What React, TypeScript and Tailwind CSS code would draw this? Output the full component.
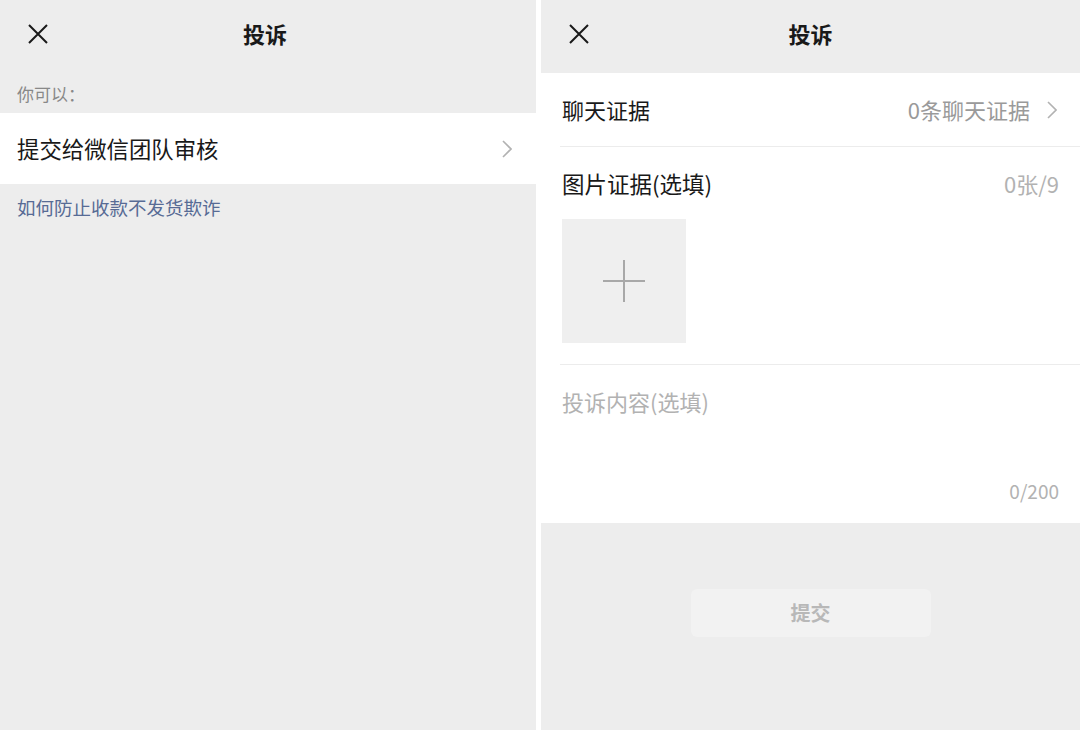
const font = { fontFamily: '"Noto Sans CJK SC", "Noto Sans", sans-serif' };

function CloseIcon() {
  return (
    <svg width="22" height="22" viewBox="0 0 22 22" fill="none" stroke="#191919" strokeWidth="2">
      <path d="M2 2 L20 20 M20 2 L2 20" />
    </svg>
  );
}

function Chevron() {
  return (
    <svg width="10" height="18" viewBox="0 0 10 18" fill="none" stroke="#b2b2b2" strokeWidth="1.6">
      <path d="M1 1 L9 9 L1 17" />
    </svg>
  );
}

function Header({ shift }: { shift?: boolean }) {
  return (
    <div className={`relative flex h-[68px] items-center justify-center ${shift ? 'pr-[6px]' : ''}`}>
      <div className="absolute left-[27px] top-[23px]">
        <CloseIcon />
      </div>
      <span className="pb-[2px] text-[22px] font-bold text-[#191919]">投诉</span>
    </div>
  );
}

export default function App() {
  return (
    <div className="flex h-[730px] w-[1080px] justify-between overflow-hidden bg-white" style={font}>
      {/* left: choose action */}
      <div className="flex w-[536px] flex-col bg-[#ededed]">
        <Header shift />
        <div className="pl-[17px] pt-[14px] pb-[7px] text-[17px] leading-[24px] text-[#888888]">你可以：</div>
        <div className="flex h-[71px] items-center justify-between bg-white pl-[17px] pr-[24px]">
          <span className="text-[22.4px] text-[#191919]">提交给微信团队审核</span>
          <Chevron />
        </div>
        <div className="pl-[17px] pt-[12px] text-[18.5px] leading-[22px] text-[#576b95]">如何防止收款不发货欺诈</div>
      </div>

      {/* right: complaint form */}
      <div className="flex w-[539px] flex-col bg-[#ededed]">
        <div className="h-[73px]">
          <Header />
        </div>
        <div className="bg-white">
          <div className="flex h-[73px] items-center justify-between pl-[21px] pr-[23px]">
            <span className="text-[22px] text-[#191919]">聊天证据</span>
            <div className="flex items-center gap-[17px]">
              <span className="text-[22px] text-[#9a9a9a]">0条聊天证据</span>
              <Chevron />
            </div>
          </div>
          <div className="ml-[19px] border-t border-[#ececec]" />
          <div className="px-[21px] pt-[23px] pb-[21px]">
            <div className="flex items-center justify-between leading-[26px]">
              <span className="text-[22.5px] text-[#191919]">图片证据(选填)</span>
              <span className="text-[22px] text-[#b2b2b2]">0张/9</span>
            </div>
            <div className="mt-[23px] flex h-[124px] w-[124px] items-center justify-center bg-[#efefef]">
              <svg width="44" height="44" viewBox="0 0 44 44" stroke="#a8a8a8" strokeWidth="2">
                <path d="M22 1 V43 M1 22 H43" />
              </svg>
            </div>
          </div>
          <div className="ml-[19px] border-t border-[#ececec]" />
          <div className="flex h-[158px] flex-col justify-between px-[21px] pt-[24px] pb-[22px]">
            <span className="text-[22px] leading-[24px] text-[#b2b2b2]">投诉内容(选填)</span>
            <span className="self-end text-[19px] leading-[20px] text-[#b2b2b2]">0/200</span>
          </div>
        </div>
        <div className="flex justify-center pt-[66px]">
          <div className="flex h-[48px] w-[240px] items-center justify-center rounded-md bg-[#f2f2f2] text-[20px] font-bold text-[#b8b8b8]">
            提交
          </div>
        </div>
      </div>
    </div>
  );
}
